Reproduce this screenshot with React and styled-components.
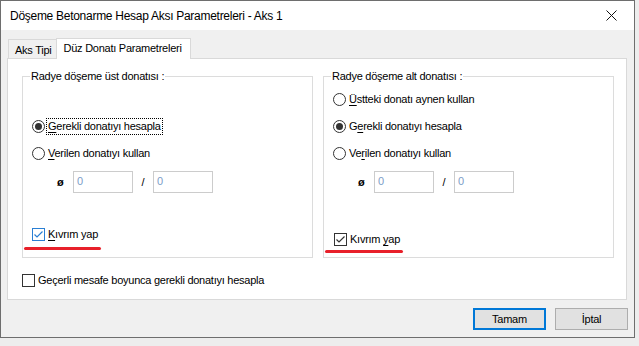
import styled, { createGlobalStyle } from "styled-components";

const GlobalStyle = createGlobalStyle`
  html, body {
    margin: 0;
    padding: 0;
    background: #ededed;
  }
  body {
    font-family: "Liberation Sans", Arial, sans-serif;
    font-size: 11px;
    letter-spacing: -0.25px;
    color: #000;
  }
`;

const Window = styled.div`
  width: 635px;
  height: 338px;
  box-sizing: border-box;
  border: 1px solid #6e6e6e;
  background: #f0f0f0;
  display: flex;
  flex-direction: column;
`;

const TitleBar = styled.div`
  height: 29px;
  background: #fff;
  display: flex;
  align-items: center;
  padding-left: 9px;
  font-size: 12px;
  letter-spacing: -0.28px;
`;

const Title = styled.div`
  flex: 1;
`;

const CloseButton = styled.div`
  width: 46px;
  height: 29px;
  display: flex;
  align-items: center;
  justify-content: center;
`;

const Body = styled.div`
  flex: 1;
  padding: 8px 7px 7px 6px;
  display: flex;
  flex-direction: column;
`;

const TabStrip = styled.div`
  display: flex;
  align-items: flex-end;
  padding-left: 1px;
  margin-bottom: -1px;
  position: relative;
  z-index: 1;
`;

const Tab = styled.div`
  box-sizing: border-box;
  height: ${({ $active }) => ($active ? "21px" : "19px")};
  margin-bottom: ${({ $active }) => ($active ? "0" : "1px")};
  margin-left: ${({ $active }) => ($active ? "-1px" : "0")};
  padding: ${({ $active }) => ($active ? "3px 8px 0 7px" : "4px 4px 0 6px")};
  border: 1px solid #d9d9d9;
  border-bottom: none;
  background: ${({ $active }) => ($active ? "#fff" : "#f0f0f0")};
  white-space: nowrap;
`;

const Panel = styled.div`
  box-sizing: border-box;
  height: 242px;
  border: 1px solid #d9d9d9;
  background: #fff;
  padding: 11px 12px 0 14px;
`;

const GroupRow = styled.div`
  display: flex;
  gap: 10px;
`;

const Group = styled.fieldset`
  box-sizing: border-box;
  width: 291px;
  height: 188px;
  margin: 0;
  padding: 0;
  border: 1px solid #dcdcdc;
  min-width: 0;
`;

const Legend = styled.legend`
  margin-left: 7px;
  padding: 0 1px;
  line-height: 13px;
`;

const GroupBody = styled.div`
  display: flex;
  flex-direction: column;
  padding: 3px 0 0 9px;
`;

const Row = styled.div`
  height: 27px;
  display: flex;
  align-items: center;
  visibility: ${({ $hidden }) => ($hidden ? "hidden" : "visible")};
`;

const RadioCircle = styled.span`
  box-sizing: border-box;
  width: 13px;
  height: 13px;
  border: 1px solid #333;
  border-radius: 50%;
  background: #fff;
  display: flex;
  align-items: center;
  justify-content: center;
  &::after {
    content: "";
    width: 7px;
    height: 7px;
    border-radius: 50%;
    background: #333;
    display: ${({ $checked }) => ($checked ? "block" : "none")};
  }
`;

const Label = styled.span`
  margin-left: 2px;
  padding: 0 1px;
  line-height: 15px;
  outline: ${({ $focused }) => ($focused ? "1px dotted #000" : "none")};
  white-space: nowrap;
  u {
    text-underline-offset: 2px;
  }
`;

const InputRow = styled.div`
  display: flex;
  align-items: center;
  margin: 4px 0 0 25px;
  height: 22px;
`;

const Phi = styled.span`
  width: 16px;
  font-weight: bold;
`;

const Slash = styled.span`
  width: 20px;
  text-align: center;
`;

const NumberBox = styled.div`
  box-sizing: border-box;
  width: 60px;
  height: 22px;
  border: 1px solid #cccccc;
  background: #fff;
  color: #7d9cc8;
  padding: 1px 3px;
  line-height: 16px;
`;

const CheckRow = styled.div`
  display: flex;
  align-items: center;
  height: 13px;
  margin-top: ${({ $top }) => $top}px;
  margin-left: ${({ $left }) => $left || 0}px;
`;

const CheckBox = styled.span`
  box-sizing: border-box;
  width: 13px;
  height: 13px;
  border: 1px solid ${({ $color }) => $color};
  background: #fff;
  display: flex;
  align-items: center;
  justify-content: center;
  flex-shrink: 0;
`;

const RedMark = styled.div`
  width: ${({ $width }) => $width}px;
  height: 3px;
  border-radius: 2px;
  background: #e8202a;
  margin: ${({ $top }) => $top}px 0 0 -8px;
`;

const BottomCheck = styled.div`
  display: flex;
  align-items: center;
  margin-top: 15px;
`;

const ButtonRow = styled.div`
  display: flex;
  justify-content: flex-end;
  gap: 9px;
  margin: 8px -1px 0 0;
`;

const Button = styled.div`
  box-sizing: border-box;
  width: 73px;
  height: 22px;
  display: flex;
  align-items: center;
  justify-content: center;
  background: #e1e1e1;
  border: ${({ $default }) =>
    $default ? "2px solid #0078d7" : "1px solid #adadad"};
`;

const Radio = ({ checked, focused, hidden, children }) => (
  <Row $hidden={hidden}>
    <RadioCircle $checked={checked} />
    <Label $focused={focused}>{children}</Label>
  </Row>
);

const Check = ({ checked, color = "#333" }) => (
  <CheckBox $color={color}>
    {checked && (
      <svg width="11" height="11" viewBox="0 0 11 11">
        <path d="M1.5 5.5 L4 8 L9.5 2.5" fill="none" stroke={color} strokeWidth="1.2" />
      </svg>
    )}
  </CheckBox>
);

const DiameterInputs = () => (
  <InputRow>
    <Phi>ø</Phi>
    <NumberBox>0</NumberBox>
    <Slash>/</Slash>
    <NumberBox>0</NumberBox>
  </InputRow>
);

const App = () => {
  return (
    <>
      <GlobalStyle />
      <Window>
        <TitleBar>
          <Title>Döşeme Betonarme Hesap Aksı Parametreleri - Aks 1</Title>
          <CloseButton>
            <svg width="11" height="11" viewBox="0 0 11 11">
              <path d="M0.5 0.5 L10.5 10.5 M10.5 0.5 L0.5 10.5" stroke="#111" strokeWidth="1" />
            </svg>
          </CloseButton>
        </TitleBar>
        <Body>
          <TabStrip>
            <Tab>Aks Tipi</Tab>
            <Tab $active>Düz Donatı Parametreleri</Tab>
          </TabStrip>
          <Panel>
            <GroupRow>
              <Group>
                <Legend>Radye döşeme üst donatısı :</Legend>
                <GroupBody>
                  <Radio hidden>Üstteki donatı aynen kullan</Radio>
                  <Radio checked focused>
                    <u>G</u>erekli donatıyı hesapla
                  </Radio>
                  <Radio>
                    <u>V</u>erilen donatıyı kullan
                  </Radio>
                  <DiameterInputs />
                  <CheckRow $top={35}>
                    <Check checked color="#2a7fd4" />
                    <Label>
                      <u>K</u>ıvrım yap
                    </Label>
                  </CheckRow>
                  <RedMark $width={77} $top={6} />
                </GroupBody>
              </Group>
              <Group>
                <Legend>Radye döşeme alt donatısı :</Legend>
                <GroupBody>
                  <Radio>
                    <u>Ü</u>stteki donatı aynen kullan
                  </Radio>
                  <Radio checked>
                    G<u>e</u>rekli donatıyı hesapla
                  </Radio>
                  <Radio>
                    Ve<u>r</u>ilen donatıyı kullan
                  </Radio>
                  <DiameterInputs />
                  <CheckRow $top={40} $left={1}>
                    <Check checked />
                    <Label>
                      Kıvrım <u>y</u>ap
                    </Label>
                  </CheckRow>
                  <RedMark $width={78} $top={4} />
                </GroupBody>
              </Group>
            </GroupRow>
            <BottomCheck>
              <Check />
              <Label>Geçerli mesafe boyunca gerekli donatıyı hesapla</Label>
            </BottomCheck>
          </Panel>
          <ButtonRow>
            <Button $default>Tamam</Button>
            <Button>İptal</Button>
          </ButtonRow>
        </Body>
      </Window>
    </>
  );
};

export default App;
